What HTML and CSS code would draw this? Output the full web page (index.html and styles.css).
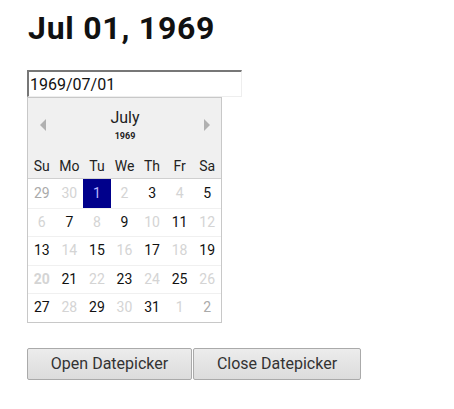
FILE: index.html
```html
<!DOCTYPE html>
<html>
<head>
<meta charset="utf-8">
<link rel="stylesheet" href="styles.css">
</head>
<body>
<div class="page">
  <h1 class="title">Jul 01, 1969</h1>
  <div class="field">
    <input class="date-input" type="text" value="1969/07/01">
    <div class="cal">
      <div class="cal-head">
        <span class="arrow arrow-left"></span>
        <div class="month-box">
          <div class="month">July</div>
          <div class="year">1969</div>
        </div>
        <span class="arrow arrow-right"></span>
      </div>
      <div class="weekdays">
        <span>Su</span><span>Mo</span><span>Tu</span><span>We</span><span>Th</span><span>Fr</span><span>Sa</span>
      </div>
      <div class="days">
        <div class="row"><span class="g2">29</span><span class="g1">30</span><span class="sel">1</span><span class="g1">2</span><span>3</span><span class="g1">4</span><span>5</span></div>
        <div class="row"><span class="g1">6</span><span>7</span><span class="g1">8</span><span>9</span><span class="g1">10</span><span>11</span><span class="g1">12</span></div>
        <div class="row"><span>13</span><span class="g1">14</span><span>15</span><span class="g1">16</span><span>17</span><span class="g1">18</span><span>19</span></div>
        <div class="row"><span class="g1 b">20</span><span>21</span><span class="g1">22</span><span>23</span><span class="g1">24</span><span>25</span><span class="g1">26</span></div>
        <div class="row"><span>27</span><span class="g1">28</span><span>29</span><span class="g1">30</span><span>31</span><span class="g1">1</span><span class="g2">2</span></div>
      </div>
    </div>
  </div>
  <div class="buttons">
    <button class="btn btn-open">Open Datepicker</button>
    <button class="btn btn-close">Close Datepicker</button>
  </div>
</div>
</body>
</html>
```

FILE: styles.css
```css
html, body {
  margin: 0;
  padding: 0;
  background: #fff;
}
body {
  font-family: Roboto, "Liberation Sans", sans-serif;
  color: #000;
}
.page {
  padding: 9px 0 0 27px;
}
.title {
  font-family: Roboto, "Liberation Sans", sans-serif;
  font-weight: 700;
  font-size: 32px;
  line-height: 38px;
  letter-spacing: 0.75px;
  margin: 0 0 23px 1px;
  color: #111;
}
.field {
  width: 215px;
}
.date-input {
  display: block;
  box-sizing: border-box;
  width: 215px;
  height: 27px;
  margin: 0;
  padding: 1px 1px 0;
  border: 1px solid #eee;
  border-top: 2px solid #777;
  border-left: 2px solid #777;
  font-family: Roboto, sans-serif;
  font-size: 16px;
  color: #111;
  outline: none;
  background: #fff;
}
.cal {
  box-sizing: border-box;
  width: 195px;
  border: 1px solid #c8c8c8;
  background: #fff;
}
.cal-head {
  height: 54px;
  background: #f0f0f0;
  display: flex;
  align-items: flex-start;
  justify-content: space-between;
  padding: 0 11px 0 12px;
}
.month-box {
  text-align: center;
  padding-top: 10px;
}
.month {
  font-size: 16px;
  line-height: 20px;
  color: #222;
}
.year {
  font-size: 9px;
  font-weight: 700;
  line-height: 12px;
  margin-top: 2px;
  color: #222;
}
.arrow {
  width: 0;
  height: 0;
  margin-top: 21px;
  border-top: 6px solid transparent;
  border-bottom: 6px solid transparent;
}
.arrow-left {
  border-right: 6px solid #b0b0b0;
}
.arrow-right {
  border-left: 6px solid #b0b0b0;
}
.weekdays {
  display: grid;
  grid-template-columns: repeat(7, 1fr);
  height: 26px;
  background: #f0f0f0;
  border-bottom: 1px solid #d0d0d0;
  font-size: 14px;
  line-height: 28px;
  text-align: center;
  color: #222;
}
.row {
  box-sizing: border-box;
  display: grid;
  grid-template-columns: repeat(7, 1fr);
  height: 28.6px;
  border-top: 1px solid #f0f0f0;
  font-size: 14px;
  line-height: 27px;
  text-align: center;
  color: #111;
}
.row:first-child {
  border-top: none;
  line-height: 28px;
}
.row span.g1 {
  color: #d4d4d4;
}
.row span.g2 {
  color: #aaa;
}
.row span.b {
  font-weight: 700;
}
.row span.sel {
  background: #00008b;
  color: #b8b8ff;
}
.buttons {
  display: flex;
  gap: 1px;
  margin-top: 25px;
}
.btn {
  height: 32px;
  margin: 0;
  padding: 0;
  border: 1px solid #aaa;
  border-radius: 2px;
  background: linear-gradient(#ececec, #dcdcdc);
  font-family: Roboto, "Liberation Sans", sans-serif;
  font-size: 16px;
  color: #333;
}
.btn-open {
  width: 165px;
}
.btn-close {
  width: 168px;
}
```
